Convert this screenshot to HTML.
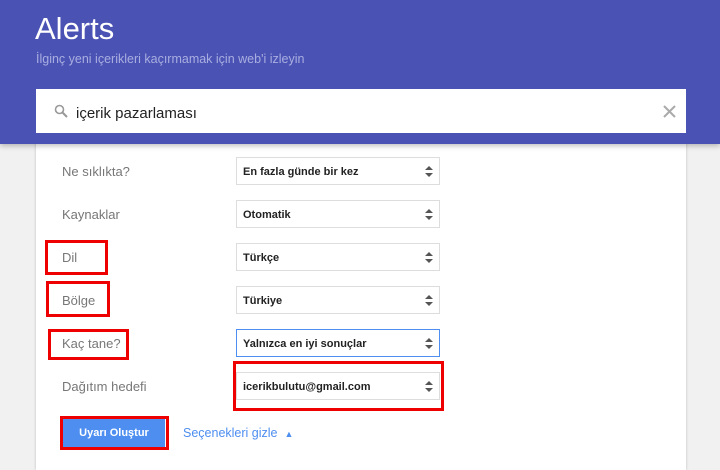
<!DOCTYPE html>
<html><head><meta charset="utf-8"><style>
*{box-sizing:border-box;margin:0;padding:0}
body{width:720px;height:460px;overflow:hidden;background:#f1f1f1;font-family:"Liberation Sans",Arial,sans-serif;position:relative}
.hdr{position:absolute;left:0;top:0;width:720px;height:144px;background:#4a52b4;box-shadow:0 2px 5px rgba(0,0,0,.25);z-index:2}
.t{position:absolute;left:35px;top:11px;color:#fff;font-size:31px;font-weight:300}
.sub{position:absolute;left:36px;top:52px;color:#a9aee0;font-size:12.5px}
.sb{position:absolute;left:36px;top:89px;width:650px;height:44px;background:#fff}
.sb .q{position:absolute;left:40px;top:16px;font-size:15px;color:#222}
.card{position:absolute;left:36px;top:140px;width:650px;height:330px;background:#fff;box-shadow:0 0 3px rgba(0,0,0,.2)}
.l{position:absolute;left:62px;font-size:13px;color:#777;z-index:3}
.s{position:absolute;left:236px;width:204px;height:28px;border:1px solid #ddd;background:#fff;font-size:11px;font-weight:bold;color:#222;padding:8px 0 0 6px;z-index:3}
.s:after{content:"";position:absolute;right:6px;top:8px;border-left:4px solid transparent;border-right:4px solid transparent;border-bottom:4px solid #555}
.s:before{content:"";position:absolute;right:6px;top:15px;border-left:4px solid transparent;border-right:4px solid transparent;border-top:4px solid #555}
.r{position:absolute;border:3px solid #e00;z-index:4}
.btn{position:absolute;left:63px;top:419px;width:102px;height:28px;background:#4d8ef0;color:#fff;font-size:11px;font-weight:bold;text-align:center;line-height:28px;z-index:3}
.lnk{position:absolute;left:183px;top:426px;color:#4d8ef0;font-size:12.5px;z-index:3}
</style></head><body>
<div class="hdr">
<div class="t">Alerts</div>
<div class="sub">İlginç yeni içerikleri kaçırmamak için web'i izleyin</div>
<div class="sb">
<svg style="position:absolute;left:18px;top:15px" width="14" height="14" viewBox="0 0 14 14"><circle cx="5.5" cy="5.5" r="4" fill="none" stroke="#999" stroke-width="1.6"/><path d="M8.5 8.5L13 13" stroke="#999" stroke-width="2"/></svg>
<div class="q">içerik pazarlaması</div>
<svg style="position:absolute;left:627px;top:16px" width="13" height="13" viewBox="0 0 13 13"><path d="M1 1L12 12M12 1L1 12" stroke="#aaa" stroke-width="2"/></svg>
</div></div>
<div class="card"></div>
<div class="l" style="top:164px">Ne sıklıkta?</div><div class="s" style="top:157px">En fazla günde bir kez</div>
<div class="l" style="top:207px">Kaynaklar</div><div class="s" style="top:200px">Otomatik</div>
<div class="l" style="top:250px">Dil</div><div class="s" style="top:243px">Türkçe</div>
<div class="l" style="top:293px">Bölge</div><div class="s" style="top:286px">Türkiye</div>
<div class="l" style="top:336px">Kaç tane?</div><div class="s" style="top:329px;border-color:#4d8ef0">Yalnızca en iyi sonuçlar</div>
<div class="l" style="top:379px">Dağıtım hedefi</div><div class="s" style="top:372px">icerikbulutu@gmail.com</div>
<div class="btn">Uyarı Oluştur</div>
<div class="lnk">Seçenekleri gizle &nbsp;<span style="font-size:9px">▲</span></div>
<div class="r" style="left:45px;top:240px;width:63px;height:35px"></div>
<div class="r" style="left:46px;top:281px;width:64px;height:36px"></div>
<div class="r" style="left:48px;top:329px;width:81px;height:31px"></div>
<div class="r" style="left:233px;top:361px;width:211px;height:50px"></div>
<div class="r" style="left:60px;top:416px;width:109px;height:34px"></div>
</body></html>
